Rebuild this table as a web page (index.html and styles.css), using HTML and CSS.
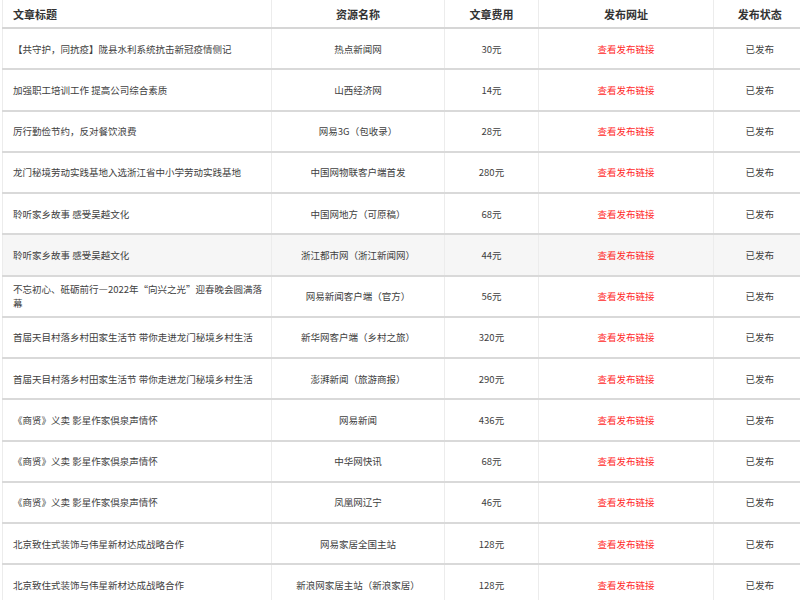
FILE: index.html
```html
<!DOCTYPE html>
<html lang="zh-CN">
<head>
<meta charset="utf-8">
<title>文章发布列表</title>
<link rel="stylesheet" href="styles.css">
</head>
<body>
<table class="list">
  <colgroup>
    <col class="c-title"><col class="c-source"><col class="c-fee"><col class="c-url"><col class="c-status">
  </colgroup>
  <thead>
    <tr>
      <th class="left">文章标题</th>
      <th>资源名称</th>
      <th>文章费用</th>
      <th>发布网址</th>
      <th class="status">发布状态</th>
    </tr>
  </thead>
  <tbody>
    <tr><td class="left">【共守护，同抗疫】陇县水利系统抗击新冠疫情侧记</td><td>热点新闻网</td><td>30元</td><td><a class="link">查看发布链接</a></td><td class="status">已发布</td></tr>
    <tr><td class="left">加强职工培训工作 提高公司综合素质</td><td>山西经济网</td><td>14元</td><td><a class="link">查看发布链接</a></td><td class="status">已发布</td></tr>
    <tr><td class="left">厉行勤俭节约，反对餐饮浪费</td><td>网易3G（包收录）</td><td>28元</td><td><a class="link">查看发布链接</a></td><td class="status">已发布</td></tr>
    <tr><td class="left">龙门秘境劳动实践基地入选浙江省中小学劳动实践基地</td><td>中国网物联客户端首发</td><td>280元</td><td><a class="link">查看发布链接</a></td><td class="status">已发布</td></tr>
    <tr><td class="left">聆听家乡故事 感受吴越文化</td><td>中国网地方（可原稿）</td><td>68元</td><td><a class="link">查看发布链接</a></td><td class="status">已发布</td></tr>
    <tr class="hover"><td class="left">聆听家乡故事 感受吴越文化</td><td>浙江都市网（浙江新闻网）</td><td>44元</td><td><a class="link">查看发布链接</a></td><td class="status">已发布</td></tr>
    <tr><td class="left">不忘初心、砥砺前行—2022年“向兴之光”迎春晚会圆满落幕</td><td>网易新闻客户端（官方）</td><td>56元</td><td><a class="link">查看发布链接</a></td><td class="status">已发布</td></tr>
    <tr><td class="left">首届天目村落乡村田家生活节 带你走进龙门秘境乡村生活</td><td>新华网客户端（乡村之旅）</td><td>320元</td><td><a class="link">查看发布链接</a></td><td class="status">已发布</td></tr>
    <tr><td class="left">首届天目村落乡村田家生活节 带你走进龙门秘境乡村生活</td><td>澎湃新闻（旅游商报）</td><td>290元</td><td><a class="link">查看发布链接</a></td><td class="status">已发布</td></tr>
    <tr><td class="left">《商贤》义卖 影星作家倶泉声情怀</td><td>网易新闻</td><td>436元</td><td><a class="link">查看发布链接</a></td><td class="status">已发布</td></tr>
    <tr><td class="left">《商贤》义卖 影星作家倶泉声情怀</td><td>中华网快讯</td><td>68元</td><td><a class="link">查看发布链接</a></td><td class="status">已发布</td></tr>
    <tr><td class="left">《商贤》义卖 影星作家倶泉声情怀</td><td>凤凰网辽宁</td><td>46元</td><td><a class="link">查看发布链接</a></td><td class="status">已发布</td></tr>
    <tr><td class="left">北京致住式装饰与伟星新材达成战略合作</td><td>网易家居全国主站</td><td>128元</td><td><a class="link">查看发布链接</a></td><td class="status">已发布</td></tr>
    <tr><td class="left">北京致住式装饰与伟星新材达成战略合作</td><td>新浪网家居主站（新浪家居）</td><td>128元</td><td><a class="link">查看发布链接</a></td><td class="status">已发布</td></tr>
  </tbody>
</table>
</body>
</html>
```
FILE: styles.css
```css
html, body {
  margin: 0;
  padding: 0;
  background: #ffffff;
}

body {
  font-family: "Noto Sans CJK SC", "Liberation Sans", sans-serif;
  color: #333333;
}

.list {
  margin-left: 2px;
  width: 798px;
  border-collapse: collapse;
  table-layout: fixed;
}

.c-title { width: 269px; }
.c-source { width: 173px; }
.c-fee { width: 94px; }
.c-url { width: 175px; }
.c-status { width: 87px; }

.list th {
  height: 27px;
  padding: 0;
  font-size: 11px;
  font-weight: bold;
  color: #333333;
  text-align: center;
  border-bottom: 2px solid #d6d6d6;
  border-right: 1px solid #ececec;
}

.list td {
  height: 39.25px;
  padding: 0;
  font-size: 9.5px;
  line-height: 14px;
  color: #3e3e3e;
  text-align: center;
  border-bottom: 2px solid #d9d9d9;
  border-right: 1px solid #ececec;
  word-break: break-all;
}

.list th:first-child,
.list td:first-child {
  border-left: 1px solid #ececec;
}

.list th:last-child,
.list td:last-child {
  border-right: none;
}

.list .left {
  text-align: left;
  padding-left: 10px;
  padding-right: 6px;
}

.list .status {
  padding-left: 5px;
}

.list tr.hover td {
  background: #f6f6f6;
}

.link {
  color: #ff2b2b;
  text-decoration: none;
  cursor: pointer;
}
```
